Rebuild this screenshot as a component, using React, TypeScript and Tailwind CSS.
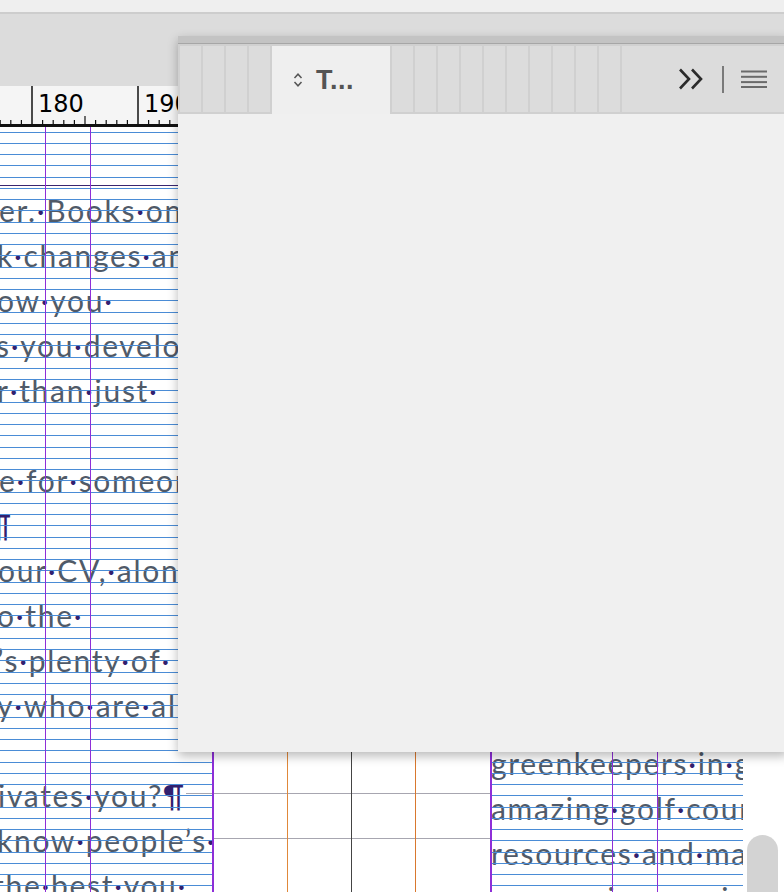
import type { ReactNode } from "react"

// left text frame, one entry per 45px line (clipped on the left by the window)
const leftLines = [
    "er.·Books·on·the·",
    "k·changes·and·",
    "ow·you·",
    "s·you·develop·",
    "r·than·just·",
    "",
    "e·for·someone·",
    "¶",
    "our·CV,·along·",
    "o·the·",
    "’s·plenty·of·",
    "y·who·are·all·",
    "",
    "ivates·you?¶",
    "know·people’s·",
    "the·best·you·",
]

// how far each line's first glyph is pushed under the left edge
const leftShift = [
    "-ml-[1px]", "-ml-[3px]", "-ml-[3px]", "-ml-[4px]", "-ml-[3px]", "", "-ml-[1px]", "-ml-[10px]",
    "-ml-[2px]", "-ml-[3px]", "-ml-[3px]", "-ml-[3px]", "", "-ml-[2px]", "-ml-[3px]", "-ml-[7px]",
]

const rightLines = [
    "greenkeepers·in·golf·",
    "amazing·golf·courses·",
    "resources·and·many·",
    "careers·in·a·senior·role·",
]

const gridRows = Array.from({ length: 70 }, (_, i) => i)

function Hidden({ text }: { text: string }) {
    const parts: ReactNode[] = text.split(/([·¶])/).map((p, i) => {
        if (p === "·" || p === "¶") {
            return <span key={i} className="text-[#32206e]">{p}</span>
        }
        return p
    })
    return <span className="bg-white">{parts}</span>
}

function BaselineGrid() {
    return (
        <div className="absolute inset-0 flex flex-col pt-[4.5px] pointer-events-none">
            {gridRows.map(r => (
                <div key={r} className="h-[11.25px] shrink-0 border-t border-[#4a8cd6]" />
            ))}
        </div>
    )
}

function RulerTicks() {
    const ticks: ReactNode[] = []
    for (let i = -4; i < 72; i++) {
        const x = 32 + i * 10.6
        const m = ((i % 10) + 10) % 10
        const h = m === 0 ? 38 : m === 5 ? 8 : 4
        ticks.push(<line key={i} x1={x} x2={x} y1={38 - h} y2={38} stroke="#111" strokeWidth={m === 0 ? 1.5 : 1.2} />)
    }
    return (
        <svg className="absolute inset-0" width="784" height="38" viewBox="0 0 784 38">
            {ticks}
        </svg>
    )
}

function Segments({ n }: { n: number }) {
    return (
        <>
            {Array.from({ length: n }, (_, i) => (
                <div key={i} className="w-[21px] shrink-0 h-[66px] bg-[#dcdcdc]" />
            ))}
        </>
    )
}

export default function App() {
    return (
        <div className="relative w-[784px] h-[892px] overflow-hidden bg-white">
            {/* app chrome */}
            <div className="h-[12px] bg-[#efefef]" />
            <div className="h-[2px] bg-[#cdcdcd]" />
            <div className="h-[72px] bg-[#dcdcdc]" />

            {/* ruler */}
            <div className="relative h-[41px] bg-[#f5f5f5] border-b-[3px] border-[#111]">
                <RulerTicks />
                <div className="relative flex font-['DejaVu_Sans',sans-serif] text-[24px] leading-[24px] text-black">
                    <div className="w-[32px] shrink-0" />
                    {["180", "190", "200", "210", "220", "230", "240"].map(l => (
                        <div key={l} className="w-[106px] shrink-0 pl-[6px] pt-[6px]">{l}</div>
                    ))}
                </div>
            </div>

            {/* document */}
            <div className="relative h-[765px] font-['Lato',sans-serif] text-[30px] tracking-[1.7px] text-[#505a68]">
                <div className="absolute left-0 w-[743px] top-[666px] h-px bg-[#a7a6b0]" />
                <div className="absolute left-0 w-[743px] top-[711px] h-px bg-[#a7a6b0]" />

                <div className="relative flex h-full">
                    {/* left text frame */}
                    <div className="relative w-[212px] shrink-0 h-full overflow-hidden">
                        <div className="pt-[61px]">
                            {leftLines.map((l, i) => (
                                <div key={i} className={"h-[45px] leading-[45px] whitespace-nowrap " + leftShift[i]}>
                                    <Hidden text={l} />
                                </div>
                            ))}
                        </div>
                        <BaselineGrid />
                        <div className="absolute left-0 right-0 top-[58px] h-px bg-[#3a2670]" />
                        <div className="absolute top-0 bottom-0 left-[45px] w-px bg-[#8e2fd8]" />
                        <div className="absolute top-0 bottom-0 left-[90px] w-px bg-[#8e2fd8]" />
                    </div>

                    {/* gutter with column guides */}
                    <div className="relative w-[278px] shrink-0 h-full">
                        <div className="absolute top-0 bottom-0 left-0 w-[1.5px] bg-[#8e2fd8]" />
                        <div className="absolute top-0 bottom-0 left-[75px] w-px bg-[#e0883a]" />
                        <div className="absolute top-0 bottom-0 left-[139px] w-px bg-[#444]" />
                        <div className="absolute top-0 bottom-0 left-[203px] w-px bg-[#d9782e]" />
                    </div>

                    {/* right text frame */}
                    <div className="relative w-[253px] shrink-0 h-full overflow-hidden">
                        <div className="pt-[614px] pl-[1px]">
                            {rightLines.map((l, i) => (
                                <div key={i} className="h-[45px] leading-[45px] whitespace-nowrap">
                                    <Hidden text={l} />
                                </div>
                            ))}
                        </div>
                        <BaselineGrid />
                        <div className="absolute top-0 bottom-0 left-0 w-[1.5px] bg-[#8e2fd8]" />
                        <div className="absolute top-0 bottom-0 left-[122px] w-px bg-[#8e2fd8]" />
                        <div className="absolute top-0 bottom-0 left-[167px] w-px bg-[#8e2fd8]" />
                    </div>

                    {/* scrollbar */}
                    <div className="flex-1 bg-white pt-[708px] pl-[4px]">
                        <div className="w-[31px] h-[70px] bg-[#d3d3d3] rounded-t-[16px]" />
                    </div>
                </div>
            </div>

            {/* floating panel */}
            <div className="absolute left-[178px] top-[36px] w-[610px] h-[716px] flex flex-col bg-[#f0f0f0] shadow-[0_4px_10px_rgba(0,0,0,0.28)]">
                <div className="h-[8px] shrink-0 bg-[#c3c3c3] border-b border-[#a6a6a6]" />
                <div className="h-[70px] shrink-0 flex gap-[2px] pl-[2px] pt-[2px] bg-[#d0d0d0]">
                    <Segments n={4} />
                    <div className="w-[118px] shrink-0 h-[68px] bg-[#efefef] flex items-center pl-[21px] gap-[13px]">
                        <svg width="10" height="16" viewBox="0 0 10 16" fill="none" stroke="#555" strokeWidth="1.5">
                            <path d="M1.5 6 L5 2.2 L8.5 6" />
                            <path d="M1.5 10 L5 13.8 L8.5 10" />
                        </svg>
                        <span className="font-['Liberation_Sans',sans-serif] font-bold text-[27px] leading-none text-[#545454] tracking-[0.5px]">T...</span>
                    </div>
                    <Segments n={10} />
                    <div className="flex-1 h-[66px] bg-[#dcdcdc] flex items-center justify-end pr-[21px]">
                        <svg width="26" height="22" viewBox="0 0 26 22" fill="none" stroke="#2b2b2b" strokeWidth="2.6">
                            <path d="M2 1.5 L11 11 L2 20.5" />
                            <path d="M14 1.5 L23 11 L14 20.5" />
                        </svg>
                        <div className="w-[2px] h-[27px] bg-[#7a7a7a] ml-[18px]" />
                        <svg className="ml-[17px]" width="26" height="18" viewBox="0 0 26 18" fill="none" stroke="#6a6a6a" strokeWidth="2">
                            <line x1="0" x2="26" y1="1.5" y2="1.5" />
                            <line x1="0" x2="26" y1="6.8" y2="6.8" />
                            <line x1="0" x2="26" y1="12.1" y2="12.1" />
                            <line x1="0" x2="26" y1="17" y2="17" />
                        </svg>
                    </div>
                </div>
                <div className="flex-1 bg-[#f0f0f0]" />
            </div>
        </div>
    )
}
